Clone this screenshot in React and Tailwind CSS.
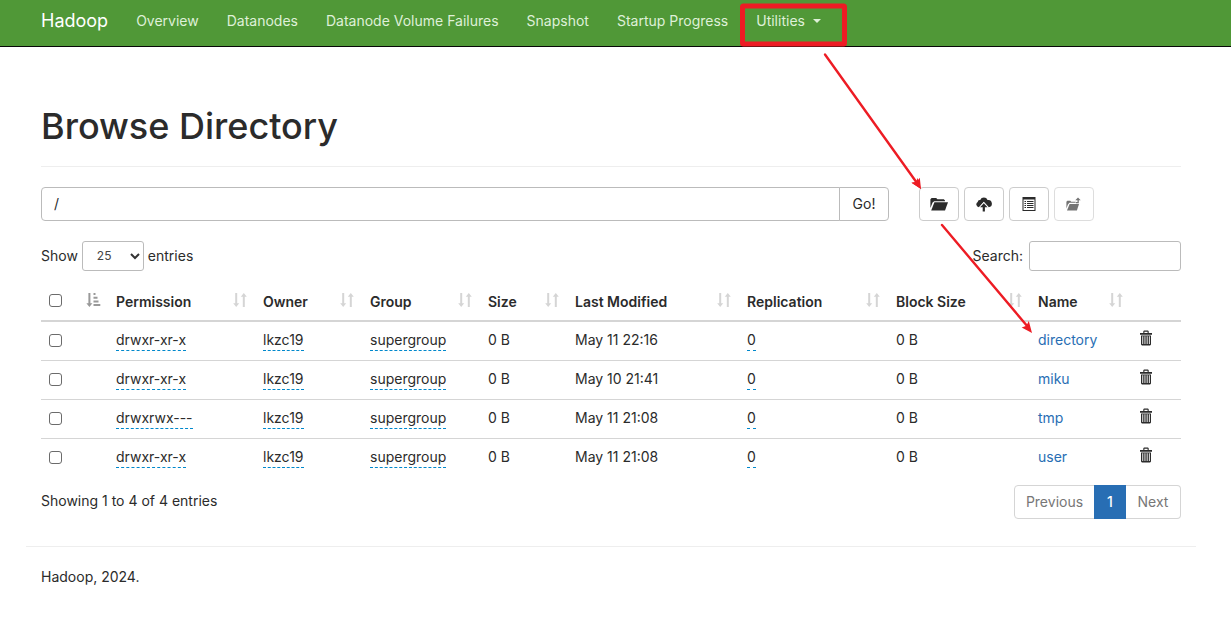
import React from "react";

const navLinks = ["Overview", "Datanodes", "Datanode Volume Failures", "Snapshot", "Startup Progress"];

const columns = ["Permission", "Owner", "Group", "Size", "Last Modified", "Replication", "Block Size", "Name"];

const rows = [
  { permission: "drwxr-xr-x", modified: "May 11 22:16", name: "directory" },
  { permission: "drwxr-xr-x", modified: "May 10 21:41", name: "miku" },
  { permission: "drwxrwx---", modified: "May 11 21:08", name: "tmp" },
  { permission: "drwxr-xr-x", modified: "May 11 21:08", name: "user" },
];

function FolderOpenIcon() {
  return (
    <svg width="18" height="14" viewBox="0 0 18 14" fill="currentColor" aria-hidden="true">
      <path d="M0.4 11V2.2L1.6 1h4.6l1.2 1.2h6.4L15 3.4v.9H4.2L2.6 5.4z" />
      <path d="M4.4 5.2H18l-3 8.4H1.2z" />
    </svg>
  );
}

function CloudUploadIcon() {
  return (
    <svg width="16" height="15" viewBox="0 0 16 15" fill="currentColor" aria-hidden="true">
      <path d="M3 10.2A2.8 2.8 0 0 1 1.7 5a2.2 2.2 0 0 1 2.5-2A4 4 0 0 1 11.6 3a3.6 3.6 0 0 1 1.2 7.2L7.8 5z" />
      <path d="M7.8 4.8L12.6 10.2H9.2V15H6.4v-4.8H3z" fill="#fff" />
      <path d="M7.8 6.3l3.7 4H8.9v4.1H6.7v-4.1H4.1z" />
    </svg>
  );
}

function ListIcon() {
  return (
    <svg width="14" height="14" viewBox="0 0 14 14" fill="currentColor" aria-hidden="true">
      <path fillRule="evenodd" d="M0.5 0h13v14h-13zM1.5 2.6V13h11V2.6z" />
      <path d="M2.5 4H4v1H2.5zM5 4h6.5v1H5zM2.5 6H4v1H2.5zM5 6h6.5v1H5zM2.5 8H4v1H2.5zM5 8h6.5v1H5zM2.5 10H4v1H2.5zM5 10h6.5v1H5z" />
    </svg>
  );
}

function ParentFolderIcon() {
  return (
    <svg width="16" height="14" viewBox="0 0 16 14" fill="currentColor" aria-hidden="true">
      <path d="M0.4 11.5V4.8l.9-1h3l.9 1h4.4v1H3.4L1.9 7.6z" />
      <path d="M3.6 6.9H13L10.9 13.4H1z" />
      <path d="M12 .6l2.7 2.7h-1.9v3H9.9V5h1.6V3.3H9.3z" />
    </svg>
  );
}

function TrashIcon() {
  return (
    <svg width="14" height="16" viewBox="0 0 14 16" fill="currentColor" aria-hidden="true">
      <path fillRule="evenodd" d="M4.3 3V1.3L5 .6h4l.7.7V3H13v1.7H1V3zM5.4 3h3.2V1.7H5.4z" />
      <path fillRule="evenodd" d="M2 5.4h10v9.1l-.9.9H2.9l-.9-.9zM3.3 6.2v7.9h.9V6.2zM5.5 6.2v7.9h.9V6.2zM7.7 6.2v7.9h.9V6.2zM9.9 6.2v7.9h.9V6.2z" />
    </svg>
  );
}

function SortIcon() {
  return (
    <svg width="14" height="14" viewBox="0 0 14 14" fill="currentColor" aria-hidden="true">
      <path d="M2.2 0h2v10.3h2L3.2 14 .2 10.3h2z" />
      <path d="M9.8 14h2V3.7h2L10.8 0l-3 3.7h2z" />
    </svg>
  );
}

function SortAscIcon() {
  return (
    <svg width="15" height="14" viewBox="0 0 15 14" fill="currentColor" aria-hidden="true">
      <path d="M2.4 0h2v10.3h2L3.4 14 .4 10.3h2z" />
      <path d="M7.5 0h2v2h-2zM7.5 3.7h4v2h-4zM7.5 7.4h5v2h-5zM7.5 11h6.8v2H7.5z" />
    </svg>
  );
}

function ToolButton({ label, disabled, children }) {
  return (
    <button
      type="button"
      aria-label={label}
      disabled={disabled}
      className="flex h-[34px] w-10 items-center justify-center rounded border border-[#ccc] bg-white disabled:opacity-65"
    >
      {children}
    </button>
  );
}

function Editable({ children }) {
  return (
    <button type="button" className="block border-b border-dashed border-[#0088cc] text-left">
      {children}
    </button>
  );
}

function Checkbox({ label }) {
  return (
    <input
      type="checkbox"
      aria-label={label}
      className="block size-[13px] appearance-none rounded-[3px] border border-[#6b6b6b] bg-white checked:bg-[#337ab7]"
    />
  );
}

function Annotations() {
  return (
    <svg
      className="pointer-events-none absolute top-0 left-0"
      width="1100"
      height="360"
      viewBox="0 0 1100 360"
      fill="none"
      aria-hidden="true"
    >
      <rect x="742.5" y="6" width="102" height="38" rx="1" stroke="#ed1c24" strokeWidth="5" />
      <g stroke="#ed1c24" strokeWidth="2.4" strokeLinecap="round">
        <path d="M825 54.5L917 183" />
        <path d="M942 225L1028 327" />
      </g>
      <g fill="#ed1c24">
        <path d="M921 189l-9.5-6.2 4.1-.9 2.2-3.8z" />
        <path d="M921 189l-1.2-11.2-3 4.2-5.3 .8z" />
        <path d="M1032 333l-10.3-5.6 4.7-1.7 2.4-4.6z" />
      </g>
    </svg>
  );
}

export default function App() {
  return (
    <div className="relative font-['Inter','Liberation_Sans',sans-serif] text-sm leading-5 text-[#2b2b2b]">
      <nav className="flex h-[47px] items-start gap-7 border-b border-[#080808] bg-[#509837] pt-[11px] pl-[41px] text-[#dff0d8]">
        <a href="#home" className="text-lg leading-5 text-white">
          Hadoop
        </a>
        {navLinks.map((link) => (
          <a key={link} href="#nav">
            {link}
          </a>
        ))}
        <button type="button" className="flex items-center gap-2">
          Utilities
          <span className="border-x-4 border-t-4 border-x-transparent border-t-current" />
        </button>
      </nav>

      <main className="pr-[50px] pl-[41px]">
        <header className="mt-[59px] border-b border-[#eee] pb-5">
          <h1 className="text-4xl leading-10 font-medium">Browse Directory</h1>
        </header>

        <div className="mt-5 grid grid-cols-[1fr_262px] gap-[30px]">
          <form className="flex h-[34px]" onSubmit={(e) => e.preventDefault()}>
            <input
              type="text"
              aria-label="Directory"
              defaultValue="/"
              className="min-w-0 flex-1 rounded-l border border-[#bbb] px-3"
            />
            <button type="submit" className="-ml-px w-[50px] rounded-r border border-[#bbb] bg-white">
              Go!
            </button>
          </form>
          <div className="flex gap-[5px]">
            <ToolButton label="Create directory">
              <FolderOpenIcon />
            </ToolButton>
            <ToolButton label="Upload files">
              <CloudUploadIcon />
            </ToolButton>
            <ToolButton label="Cut and paste">
              <ListIcon />
            </ToolButton>
            <ToolButton label="Parent directory" disabled>
              <ParentFolderIcon />
            </ToolButton>
          </div>
        </div>

        <div className="mt-5 flex justify-between">
          <label className="flex items-center gap-1">
            Show
            <span className="relative block">
              <select
                defaultValue="25"
                className="block h-[30px] w-[62px] appearance-none rounded-[3px] border border-[#bbb] bg-white pl-3.5 text-xs text-[#444]"
              >
                <option>25</option>
                <option>50</option>
                <option>100</option>
              </select>
              <svg
                className="pointer-events-none absolute top-3 right-1"
                width="10"
                height="7"
                viewBox="0 0 10 7"
                fill="none"
                stroke="#333"
                strokeWidth="2"
                aria-hidden="true"
              >
                <path d="M1 1l4 4 4-4" />
              </svg>
            </span>
            entries
          </label>
          <label className="flex items-center gap-1.5">
            Search:
            <input type="search" className="h-[30px] w-[152px] rounded-[3px] border border-[#bbb] px-2.5" />
          </label>
        </div>

        <table className="mt-[13px] w-full table-fixed border-separate border-spacing-0 text-left">
          <colgroup>
            <col className="w-[30px]" />
            <col className="w-[37px]" />
            <col className="w-[147px]" />
            <col className="w-[107px]" />
            <col className="w-[118px]" />
            <col className="w-[87px]" />
            <col className="w-[172px]" />
            <col className="w-[149px]" />
            <col className="w-[142px]" />
            <col className="w-[101px]" />
            <col className="w-[50px]" />
          </colgroup>
          <thead>
            <tr className="h-[38px] align-top [&>th]:border-b-2 [&>th]:border-[#d5d5d5]">
              <th className="pt-2.5 pl-2">
                <Checkbox label="Select all" />
              </th>
              <th aria-sort="ascending" className="pt-[9px] pr-[7px] text-[#999]">
                <span className="flex justify-end">
                  <SortAscIcon />
                </span>
              </th>
              {columns.map((column) => (
                <th key={column} className="px-2 pt-2 font-semibold">
                  <span className="flex justify-between">
                    {column}
                    <span className="pt-px text-[#d5d5d5]">
                      <SortIcon />
                    </span>
                  </span>
                </th>
              ))}
              <th />
            </tr>
          </thead>
          <tbody className="[&>tr:not(:first-child)>td]:border-t [&>tr>td]:border-[#d5d5d5]">
            {rows.map((row) => (
              <tr key={row.name} className="h-[39px] align-top first:h-[38px] [&>td]:px-2 [&>td]:pt-2">
                <td>
                  <span className="block pt-1">
                    <Checkbox label={"Select " + row.name} />
                  </span>
                </td>
                <td />
                <td>
                  <Editable>{row.permission}</Editable>
                </td>
                <td>
                  <Editable>lkzc19</Editable>
                </td>
                <td>
                  <Editable>supergroup</Editable>
                </td>
                <td>0 B</td>
                <td>{row.modified}</td>
                <td>
                  <Editable>0</Editable>
                </td>
                <td>0 B</td>
                <td>
                  <a href="#entry" className="text-[#286eb4]">
                    {row.name}
                  </a>
                </td>
                <td>
                  <button type="button" aria-label={"Delete " + row.name} className="block">
                    <TrashIcon />
                  </button>
                </td>
              </tr>
            ))}
          </tbody>
        </table>

        <div className="mt-2 flex justify-between">
          <p className="pt-1.5">Showing 1 to 4 of 4 entries</p>
          <div className="flex h-[34px] text-[#777]">
            <button type="button" className="w-[81px] rounded-l border border-[#d5d5d5]">
              Previous
            </button>
            <button type="button" className="-ml-px w-8 bg-[#286eb4] font-medium text-white">
              1
            </button>
            <button type="button" className="w-[55px] rounded-r border border-l-0 border-[#d5d5d5]">
              Next
            </button>
          </div>
        </div>
      </main>

      <footer className="mt-[27px] mr-[35px] ml-[26px] border-t border-[#eee] px-[15px] py-5">
        <p>Hadoop, 2024.</p>
      </footer>

      <Annotations />
    </div>
  );
}
